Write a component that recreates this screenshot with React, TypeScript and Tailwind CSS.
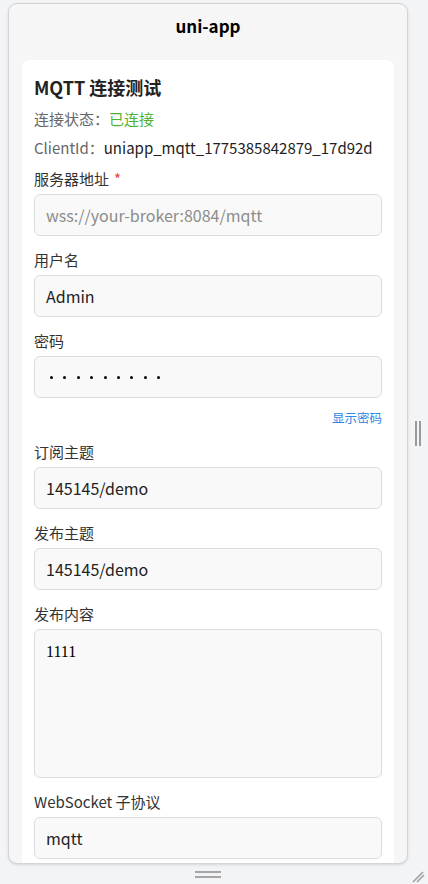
const font = { fontFamily: '"Noto Sans CJK SC", "Noto Sans", sans-serif' }

function Field({ label, required, children }: { label: string; required?: boolean; children: React.ReactNode }) {
    return (
        <div className="mb-[13px] flex flex-col gap-[5px]">
            <div className="text-[15px] leading-[21px] text-[#333]">
                {label}
                {required && <span className="ml-[5px] text-[#e64340]">*</span>}
            </div>
            {children}
        </div>
    )
}

function Input({ value, placeholder }: { value?: string; placeholder?: string }) {
    return (
        <div className="flex h-[42px] items-center rounded-[6px] border border-[#dcdcdc] bg-[#f9f9f9] px-[11px] text-[16px]">
            {value ? (
                <span className="text-[#222]">{value}</span>
            ) : (
                <span className="text-[#8c8c8c]">{placeholder}</span>
            )}
        </div>
    )
}

export default function App() {
    return (
        <div className="flex h-[884px] w-[428px] flex-col bg-[#f3f4f6]" style={font}>
            <div className="flex h-[864px] pt-[3px]">
                <div className="w-[8px]" />

                {/* phone frame */}
                <div className="flex h-[861px] w-[400px] flex-col overflow-hidden rounded-[9px] border border-[#d2d4d8] bg-[#f6f6f7] shadow-sm">
                    <div className="flex h-[44px] shrink-0 items-center justify-center text-[17px] font-bold text-black">
                        uni-app
                    </div>

                    <div className="px-[13px] pt-[12px]">
                        <div className="rounded-[8px] bg-white px-[12px] pt-[15px] pb-4">
                            <div className="text-[18px] font-bold leading-[24px] text-[#222]">MQTT 连接测试</div>
                            <div className="mt-[9px] text-[15px] leading-[22px] text-[#666]">
                                连接状态：<span className="text-[#4fb233]">已连接</span>
                            </div>
                            <div className="mt-[7px] text-[15px] leading-[22px] text-[#666]">
                                ClientId：<span className="text-[#222]">uniapp_mqtt_1775385842879_17d92d</span>
                            </div>

                            <div className="mt-[9px]">
                                <Field label="服务器地址" required>
                                    <Input placeholder="wss://your-broker:8084/mqtt" />
                                </Field>
                                <Field label="用户名">
                                    <Input value="Admin" />
                                </Field>

                                <div className="mb-[13px] flex flex-col">
                                    <div className="text-[15px] leading-[21px] text-[#333]">密码</div>
                                    <div className="mt-[5px] flex h-[42px] items-center gap-[10.4px] rounded-[6px] border border-[#dcdcdc] bg-[#f9f9f9] pl-[15px]">
                                        {Array.from({ length: 9 }).map((_, i) => (
                                            <span key={i} className="h-[3px] w-[3px] rounded-full bg-black" />
                                        ))}
                                    </div>
                                    <div className="mt-[10px] text-right text-[12.5px] leading-5 text-[#2d86e6]">显示密码</div>
                                </div>

                                <Field label="订阅主题">
                                    <Input value="145145/demo" />
                                </Field>
                                <Field label="发布主题">
                                    <Input value="145145/demo" />
                                </Field>
                                <Field label="发布内容">
                                    <div
                                        className="h-[149px] rounded-[6px] border border-[#dcdcdc] bg-[#f9f9f9] px-[11px] pt-[12px] text-[16px] leading-5 text-black"
                                        style={{ fontFamily: '"Liberation Serif", serif' }}
                                    >
                                        1111
                                    </div>
                                </Field>
                                <Field label="WebSocket 子协议">
                                    <Input value="mqtt" />
                                </Field>
                            </div>
                        </div>
                    </div>
                </div>

                {/* right resize handle */}
                <div className="flex flex-1 items-center justify-center">
                    <div className="flex h-[25px] gap-[2px]">
                        <span className="w-[2px] bg-[#9a9a9a]" />
                        <span className="w-[2px] bg-[#9a9a9a]" />
                    </div>
                </div>
            </div>

            {/* bottom resize handle */}
            <div className="relative flex flex-1">
                <div className="flex w-[416px] items-center justify-center">
                    <div className="flex w-[26px] flex-col gap-[3px]">
                        <span className="h-[2px] bg-[#a5a5a5]" />
                        <span className="h-[2px] bg-[#a5a5a5]" />
                    </div>
                </div>
                <svg className="absolute right-[3px] bottom-[1px]" width="13" height="12" viewBox="0 0 13 12">
                    <line x1="1" y1="11" x2="11" y2="1" stroke="#9a9a9a" strokeWidth="1.4" />
                    <line x1="5" y1="11" x2="12" y2="4" stroke="#9a9a9a" strokeWidth="1.4" />
                </svg>
            </div>
        </div>
    )
}
